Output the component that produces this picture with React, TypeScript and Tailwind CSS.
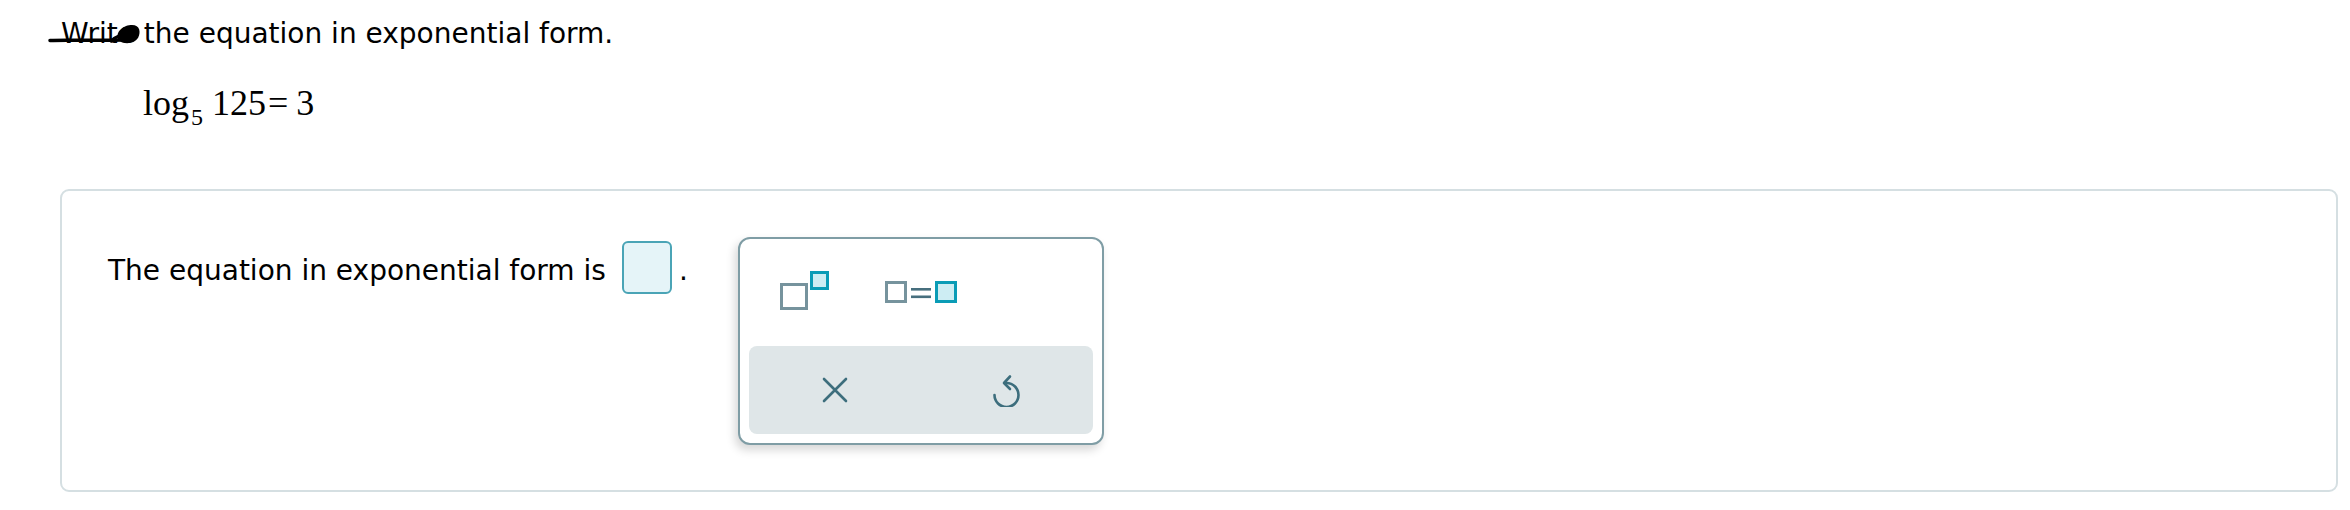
import React from 'react';

const ExponentIcon = () => (
  <svg width="49" height="39" viewBox="0 0 49 39">
    <rect x="1.5" y="13.5" width="25" height="24" fill="#fff" stroke="#76939d" strokeWidth="3" />
    <rect x="31.5" y="1.5" width="16" height="16" fill="#cdedf3" stroke="#0a9cb6" strokeWidth="3" />
  </svg>
);

const EqualsIcon = () => (
  <svg width="72" height="22" viewBox="0 0 72 22">
    <rect x="1.5" y="1.5" width="19" height="19" fill="#fff" stroke="#76939d" strokeWidth="3" />
    <rect x="26" y="7" width="20" height="2.6" fill="#476f7e" />
    <rect x="26" y="14.5" width="20" height="2.6" fill="#476f7e" />
    <rect x="51.5" y="1.5" width="19" height="19" fill="#cdedf3" stroke="#0a9cb6" strokeWidth="3" />
  </svg>
);

const App: React.FC = () => {
  return (
    <div className="relative w-[2350px] h-[510px] bg-white overflow-hidden font-['DejaVu_Sans','Liberation_Sans',sans-serif] text-black">
      {/* Question */}
      <div className="pl-[61px] pt-[18px] text-[28px] leading-[32px]">
        Write the equation in exponential form.
      </div>

      {/* pen scribble over "Write" */}
      <svg className="absolute left-[46px] top-[22px]" width="96" height="26" viewBox="0 0 96 26">
        <path d="M4 18.5 C 20 17.5, 45 19, 74 18" stroke="#000" strokeWidth="3.5" strokeLinecap="round" fill="none" />
        <path d="M72 18 C 69 9, 78 3, 86 3 C 94 3, 95 10, 92 16 C 88 22, 78 23, 72 18 Z" fill="#000" />
        <path d="M64 20 C 70 14, 78 11, 84 13" stroke="#000" strokeWidth="3" fill="none" />
      </svg>

      <div className="mt-[33px] pl-[143px] h-[40px] leading-[40px] text-[36px] font-['Liberation_Serif','Times_New_Roman',serif] whitespace-nowrap">
        <span>log</span>
        <span className="relative top-[10px] text-[24px] ml-[2px]">5</span>
        <span className="ml-[9px]">125</span>
        <span className="ml-[2px]">=</span>
        <span className="ml-[8px]">3</span>
      </div>

      {/* Answer card */}
      <div className="mt-[66px] ml-[60px] mr-[12px] h-[303px] border-2 border-[#d5dfe2] rounded-[9px] pl-[46px] pt-[46px]">
        <div className="flex items-start">
          <div className="flex items-center mt-[4px]">
            <span className="text-[28px] leading-[32px] pt-[6px] whitespace-nowrap">The equation in exponential form is</span>
            <span className="ml-[16px] w-[50px] h-[53px] border-2 border-[#4aa4b6] bg-[#e5f4f8] rounded-[6px]"></span>
            <span className="ml-[7px] text-[28px] leading-[32px] pt-[6px]">.</span>
          </div>

          {/* Math palette */}
          <div className="ml-[50px] w-[366px] h-[208px] border-2 border-[#7f9da5] rounded-[12px] bg-white p-[9px] flex flex-col shadow-[-3px_5px_10px_rgba(0,0,0,0.16)]">
            <div className="h-[88px] mb-[10px] grid grid-cols-3 items-center">
              <button className="flex items-center justify-center -ml-[4px] pb-[4px]">
                <ExponentIcon />
              </button>
              <button className="flex items-center justify-center">
                <EqualsIcon />
              </button>
              <div />
            </div>
            <div className="flex-1 grid grid-cols-2 items-center rounded-[8px] bg-[#dfe6e8]">
              <button className="flex items-center justify-center">
                <svg width="26" height="26" viewBox="0 0 26 26">
                  <path d="M2 2 L24 24 M24 2 L2 24" stroke="#3d6e7d" strokeWidth="2.6" strokeLinecap="round" />
                </svg>
              </button>
              <button className="flex items-center justify-center">
                <svg width="30" height="34" viewBox="0 0 30 34">
                  <path d="M14.5 10 A 12 12 0 1 1 2.5 22" stroke="#3d6e7d" strokeWidth="2.6" fill="none" strokeLinecap="round" />
                  <path d="M18 3.5 L 12 10 L 18 16" stroke="#3d6e7d" strokeWidth="2.6" fill="none" strokeLinecap="round" strokeLinejoin="round" />
                </svg>
              </button>
            </div>
          </div>
        </div>
      </div>
    </div>
  );
};

export default App;
